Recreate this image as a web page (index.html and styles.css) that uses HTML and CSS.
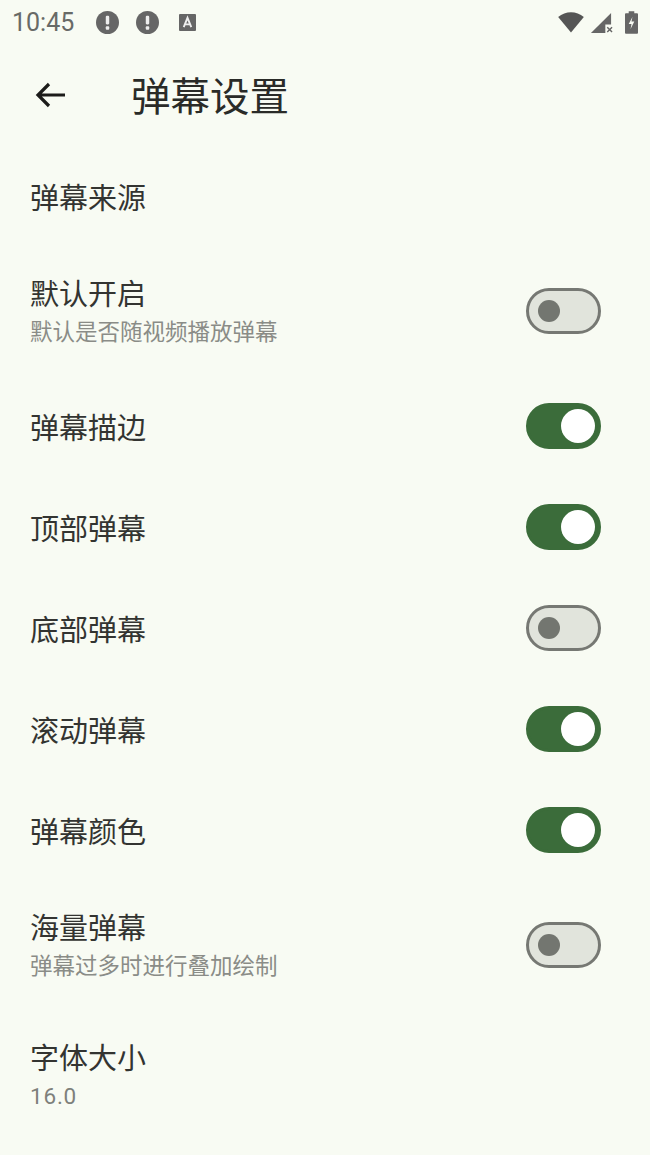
FILE: index.html
```html
<!doctype html>
<html lang="zh-CN">
  <head>
    <meta charset="UTF-8" />
    <meta name="viewport" content="width=device-width, initial-scale=1.0" />
    <title>弹幕设置</title>
    <link rel="stylesheet" href="styles.css">
  </head>
  <body>
    <div class="status-bar">
      <span class="clock">10:45</span>
      <div class="status-left">
        <svg class="alert" viewBox="0 0 24 24"><circle cx="12" cy="12" r="12" fill="#666"/><rect x="10.2" y="5" width="3.6" height="9" rx="1.2" fill="#eee"/><rect x="10.2" y="16" width="3.6" height="3.6" rx="1" fill="#eee"/></svg>
        <svg class="alert" viewBox="0 0 24 24"><circle cx="12" cy="12" r="12" fill="#666"/><rect x="10.2" y="5" width="3.6" height="9" rx="1.2" fill="#eee"/><rect x="10.2" y="16" width="3.6" height="3.6" rx="1" fill="#eee"/></svg>
        <svg class="app-icon" viewBox="0 0 18 18"><rect width="18" height="18" rx="1" fill="#666"/><path d="M5 14 9 4l4 10M6.5 11h5" fill="none" stroke="#eee" stroke-width="2"/></svg>
      </div>
      <div class="status-right">
        <svg class="wifi" viewBox="0 0 30 24"><path d="M1 6.500C9 -0.500 21 -0.500 29 6.500L15 23.500Z" fill="#555"/></svg>
        <svg class="signal" viewBox="0 0 24 24"><path d="M1 23 22 2v12h-6v9Z" fill="#666"/><path d="M18 17l5 5m0-5-5 5" stroke="#666" stroke-width="1.500"/></svg>
        <svg class="battery" viewBox="0 0 14 24"><path d="M4 0h6v2h3a1 1 0 0 1 1 1v20a1 1 0 0 1-1 1H1a1 1 0 0 1-1-1V3a1 1 0 0 1 1-1h3Z" fill="#666"/><path d="M8 6 4 13.500h3L6 19l4-8H7Z" fill="#f8fbf3"/></svg>
      </div>
    </div>

    <header class="app-bar">
      <svg class="back" viewBox="0 0 32 28"><path d="M30 14H3M14 3 3 14l11 11" fill="none" stroke="#1c1c1a" stroke-width="3.200"/></svg>
      <h1>弹幕设置</h1>
    </header>

    <ul class="settings">
      <li class="row row-plain"><div class="title">弹幕来源</div></li>
      <li class="row row-tall">
        <div><div class="title">默认开启</div><div class="sub">默认是否随视频播放弹幕</div></div>
        <span class="switch"></span>
      </li>
      <li class="row"><div class="title">弹幕描边</div><span class="switch on"></span></li>
      <li class="row"><div class="title">顶部弹幕</div><span class="switch on"></span></li>
      <li class="row"><div class="title">底部弹幕</div><span class="switch"></span></li>
      <li class="row"><div class="title">滚动弹幕</div><span class="switch on"></span></li>
      <li class="row"><div class="title">弹幕颜色</div><span class="switch on"></span></li>
      <li class="row row-tall">
        <div><div class="title">海量弹幕</div><div class="sub">弹幕过多时进行叠加绘制</div></div>
        <span class="switch"></span>
      </li>
      <li class="row row-last"><div><div class="title">字体大小</div><div class="sub value">16.0</div></div></li>
    </ul>
  </body>
</html>
```

FILE: styles.css
```css
body {
  margin: 0;
  height: 1155px;
  overflow: hidden;
  background-color: #f8fbf3;
  font-family: 'Noto Sans CJK SC', Roboto, sans-serif;
  color: #333431;
}
.status-bar {
  display: flex;
  align-items: center;
  height: 44px;
  padding: 0 12px;
}
.clock {
  font-family: Roboto, sans-serif;
  font-size: 25px;
  color: #686a67;
  width: 84px;
}
.status-left {
  display: flex;
  align-items: center;
  gap: 17px;
}
.alert {
  width: 23px;
  height: 23px;
}
.app-icon {
  width: 17px;
  height: 17px;
  margin-left: 3px;
}
.status-right {
  display: flex;
  align-items: center;
  margin-left: auto;
  gap: 5px;
}
.wifi {
  width: 28px;
  height: 22px;
}
.signal {
  width: 23px;
  height: 23px;
}
.battery {
  width: 13px;
  height: 25px;
  margin-left: 7px;
}
.app-bar {
  display: flex;
  align-items: center;
  height: 102px;
  padding-left: 35px;
}
.back {
  width: 32px;
  height: 28px;
}
h1 {
  margin: 0 0 4px 64px;
  font-size: 39.5px;
  font-weight: 400;
  color: #2a2b28;
}
.settings {
  list-style: none;
  margin: 0;
  padding: 0;
}
.row {
  display: flex;
  align-items: center;
  justify-content: space-between;
  height: 101px;
  padding: 0 49px 0 30px;
}
.row-plain {
  height: 100px;
}
.row-tall {
  height: 129.5px;
}
.row-last {
  height: 132px;
}
.title {
  font-size: 29px;
  line-height: 38px;
}
.sub {
  font-size: 22.5px;
  line-height: 38px;
  color: #8a8c87;
}
.value {
  margin-top: 2px;
  font-family: Roboto, sans-serif;
  letter-spacing: 0.8px;
  color: #7e807b;
}
.switch {
  display: flex;
  align-items: center;
  box-sizing: border-box;
  width: 75px;
  height: 46px;
  padding: 0 9px;
  background-color: #e1e4dc;
  border: 3px solid #767873;
  border-radius: 23px;
}
.switch::after {
  content: '';
  width: 22px;
  height: 22px;
  border-radius: 50%;
  background-color: #737670;
}
.switch.on {
  justify-content: flex-end;
  padding: 0 3px;
  background-color: #3b6c3a;
  border-color: #3b6c3a;
}
.switch.on::after {
  width: 34px;
  height: 34px;
  background-color: #fff;
}
```
